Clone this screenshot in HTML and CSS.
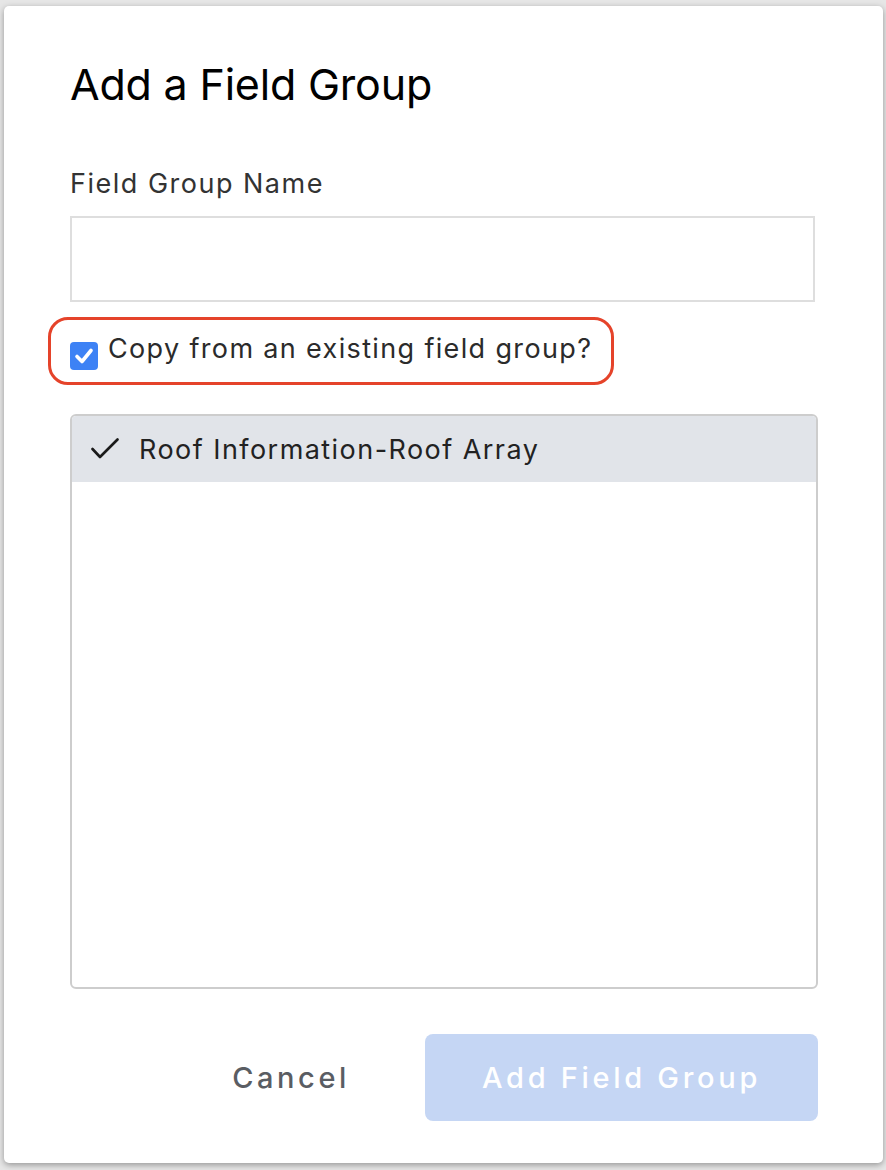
FILE: index.html
```html
<!DOCTYPE html>
<html>
<head>
<meta charset="utf-8">
<link rel="stylesheet" href="styles.css">
</head>
<body>
<div class="dialog">
  <h1 class="title">Add a Field Group</h1>
  <label class="label">Field Group Name</label>
  <div class="input"></div>
  <div class="copy-row">
    <span class="checkbox">
      <svg viewBox="0 0 28 28" width="28" height="28"><path d="M7 14.5 L12 19.5 L21 8.5" fill="none" stroke="#fff" stroke-width="3.6" stroke-linecap="round" stroke-linejoin="round"/></svg>
    </span>
    <span class="copy-text">Copy from an existing field group?</span>
  </div>
  <div class="list">
    <div class="list-item selected">
      <svg class="tick" viewBox="0 0 28 22" width="28" height="22"><path d="M1.5 11 L9 19 L26.5 1.5" fill="none" stroke="#1a1a1a" stroke-width="2.6" stroke-linecap="round" stroke-linejoin="round"/></svg>
      <span>Roof Information-Roof Array</span>
    </div>
  </div>
  <div class="actions">
    <button class="btn-cancel">Cancel</button>
    <button class="btn-primary">Add Field Group</button>
  </div>
</div>
</body>
</html>
```
FILE: styles.css
```css
html, body {
  margin: 0;
  padding: 0;
}
body {
  background: #e6e6e6;
  width: 886px;
  height: 1170px;
  overflow: hidden;
  font-family: "Inter", "Liberation Sans", sans-serif;
}
.dialog {
  box-sizing: border-box;
  margin: 6px 3px 0 4px;
  width: 879px;
  height: 1157px;
  background: #fff;
  border-radius: 5px;
  box-shadow: 0 2px 6px rgba(0,0,0,0.35);
  padding: 53px 65px 0 66px;
  display: flex;
  flex-direction: column;
}
.title {
  margin: 0;
  font-size: 43px;
  font-weight: 400;
  line-height: 50px;
  color: #000;
  letter-spacing: -0.2px;
}
.label {
  margin-top: 58px;
  font-size: 27px;
  line-height: 34px;
  color: #333;
  letter-spacing: 1.5px;
}
.input {
  margin-top: 15px;
  margin-right: 3px;
  height: 86px;
  box-sizing: border-box;
  border: 2px solid #dedede;
}
.copy-row {
  margin-top: 15px;
  margin-left: -22px;
  align-self: flex-start;
  box-sizing: border-box;
  width: 566px;
  height: 68px;
  border: 3px solid #e5432a;
  border-radius: 20px;
  display: flex;
  align-items: center;
  padding-left: 19px;
  gap: 10px;
}
.checkbox {
  width: 28px;
  height: 28px;
  margin-top: 9px;
  border-radius: 4px;
  background: #3d82f5;
  display: flex;
}
.copy-text {
  font-size: 27px;
  line-height: 34px;
  color: #2b2b2b;
  margin-top: -4px;
  letter-spacing: 1.35px;
}
.list {
  margin-top: 29px;
  height: 575px;
  box-sizing: border-box;
  border: 2px solid #cdcdcd;
  border-radius: 6px;
  overflow: hidden;
}
.list-item {
  height: 66px;
  display: flex;
  align-items: center;
  padding-left: 19px;
  gap: 20px;
  font-size: 27px;
  color: #222;
  letter-spacing: 1.45px;
}
.list-item.selected {
  background: #e1e4e9;
}
.tick {
  flex: none;
}
.actions {
  margin-top: 45px;
  display: flex;
  justify-content: flex-end;
  align-items: center;
}
.actions button {
  font-family: "Inter", "Liberation Sans", sans-serif;
  border: none;
  cursor: pointer;
  font-size: 29px;
  font-weight: 500;
}
.btn-cancel {
  background: transparent;
  color: #5a5d63;
  padding: 0;
  margin-right: 75px;
  letter-spacing: 3.6px;
}
.btn-primary {
  width: 393px;
  height: 87px;
  background: #c5d6f4;
  color: #fff;
  border-radius: 8px;
  font-weight: 600;
  letter-spacing: 3.7px;
}
```
